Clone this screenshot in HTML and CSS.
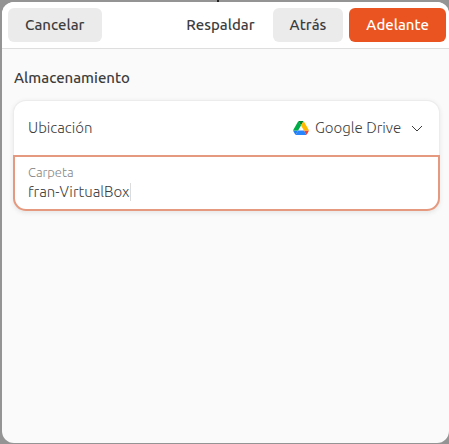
FILE: index.html
```html
<!DOCTYPE html>
<html lang="es">
<head>
<meta charset="utf-8">
<meta name="viewport" content="width=device-width, initial-scale=1">
<title>Respaldar</title>
<link rel="stylesheet" href="styles.css">
</head>
<body>
<main class="dialog">
  <header class="header">
    <button class="button" type="button">Cancelar</button>
    <h1 class="title">Respaldar</h1>
    <button class="button" type="button">Atrás</button>
    <button class="button suggested" type="button">Adelante</button>
  </header>
  <section class="content">
    <h2 class="heading">Almacenamiento</h2>
    <div class="card">
      <div class="row">
        <label class="row-label" for="location">Ubicación</label>
        <svg class="drive" viewBox="0 0 87.3 78" aria-hidden="true">
          <path fill="#1d7df2" d="M6.6 66.85l3.85 6.65c.8 1.4 1.95 2.5 3.3 3.3L27.5 53H0c0 1.55.4 3.1 1.2 4.5z"/>
          <path fill="#00ac47" d="M43.65 25L29.9 1.2c-1.35.8-2.5 1.9-3.3 3.3L1.2 48.5C.4 49.9 0 51.45 0 53h27.5z"/>
          <path fill="#ea4335" d="M73.55 76.8c1.35-.8 2.5-1.9 3.3-3.3l1.6-2.75 7.65-13.25c.8-1.4 1.2-2.95 1.2-4.5H59.8l5.85 11.5z"/>
          <path fill="#00832d" d="M43.65 25L57.4 1.2C56.05.4 54.5 0 52.9 0H34.4c-1.6 0-3.15.45-4.5 1.2z"/>
          <path fill="#2684fc" d="M59.8 53H27.5L13.75 76.8c1.35.8 2.9 1.2 4.5 1.2h50.8c1.6 0 3.15-.45 4.5-1.2z"/>
          <path fill="#ffba00" d="M73.4 26.5L60.7 4.5c-.8-1.4-1.95-2.5-3.3-3.3L43.65 25 59.8 53h27.45c0-1.55-.4-3.1-1.2-4.5z"/>
        </svg>
        <select class="select" id="location">
          <option>Google Drive</option>
        </select>
        <svg class="chevron" viewBox="0 0 12 12" aria-hidden="true">
          <path d="M1 4L6 9 11 4"/>
        </svg>
      </div>
      <div class="entry">
        <label class="entry-label" for="folder">Carpeta</label>
        <div class="entry-line">
          <input class="entry-input" id="folder" type="text" value="fran-VirtualBox">
          <span class="caret"></span>
        </div>
      </div>
    </div>
  </section>
</main>
</body>
</html>
```
FILE: styles.css
```css
* {
  box-sizing: border-box;
}

body {
  margin: 0;
  min-height: 100vh;
  padding: 2px 0 1px 2px;
  display: flex;
  background:
    linear-gradient(#222, #222) 217px 0 / 2px 2px no-repeat,
    #949494;
  color: #3d3d3d;
  font-family: Ubuntu, "Noto Sans", sans-serif;
  font-size: 15px;
  font-weight: 300;
  line-height: 20px;
}

button,
input,
select {
  font: inherit;
  color: inherit;
}

.dialog {
  flex: 1;
  min-width: 0;
  border-radius: 12px;
  background: #fafafa;
  overflow: hidden;
}

.header {
  display: flex;
  align-items: center;
  gap: 6px;
  padding: 6px 3px 6px 6px;
  background: #fff;
  border-bottom: 1px solid #dedede;
}

.button {
  height: 34px;
  padding: 0 17px;
  border: 0;
  border-radius: 6px;
  background: #ebebeb;
  font-weight: 500;
}

.suggested {
  background: #e95420;
  color: #fff;
}

.title {
  flex: 1;
  margin: 0 12px 0 0;
  text-align: right;
  font-size: 15px;
  font-weight: 500;
}

.content {
  padding: 19px 10px 12px 12px;
}

.heading {
  margin: 0 0 13px;
  font-size: 15px;
  line-height: 20px;
  font-weight: 500;
}

.card {
  border-radius: 12px;
  background: #fff;
  box-shadow: 0 0 0 1px #ececec, 0 1px 4px 1px #e6e6e6;
}

.row {
  display: flex;
  align-items: center;
  height: 54px;
  padding: 0 16px 0 14px;
}

.row-label {
  flex: 1;
}

.drive {
  width: 16px;
  height: 14px;
  margin-right: 6px;
}

.select {
  appearance: none;
  padding: 0;
  border: 0;
  background: none;
}

.chevron {
  width: 12px;
  height: 12px;
  margin-left: 9px;
  fill: none;
  stroke: #3d3d3d;
  stroke-width: 1;
}

.entry {
  margin: 0 -1px;
  padding: 6px 13px 7px;
  border: 2px solid #e59a80;
  border-radius: 0 0 13px 13px;
}

.entry-label {
  display: block;
  color: #868686;
  font-size: 13px;
  line-height: 19px;
}

.entry-line {
  display: flex;
  align-items: center;
}

.entry-input {
  field-sizing: content;
  height: 20px;
  padding: 0;
  border: 0;
  outline: 0;
  background: none;
}

.caret {
  width: 1px;
  height: 18px;
  background: #dcdcdc;
}
```
